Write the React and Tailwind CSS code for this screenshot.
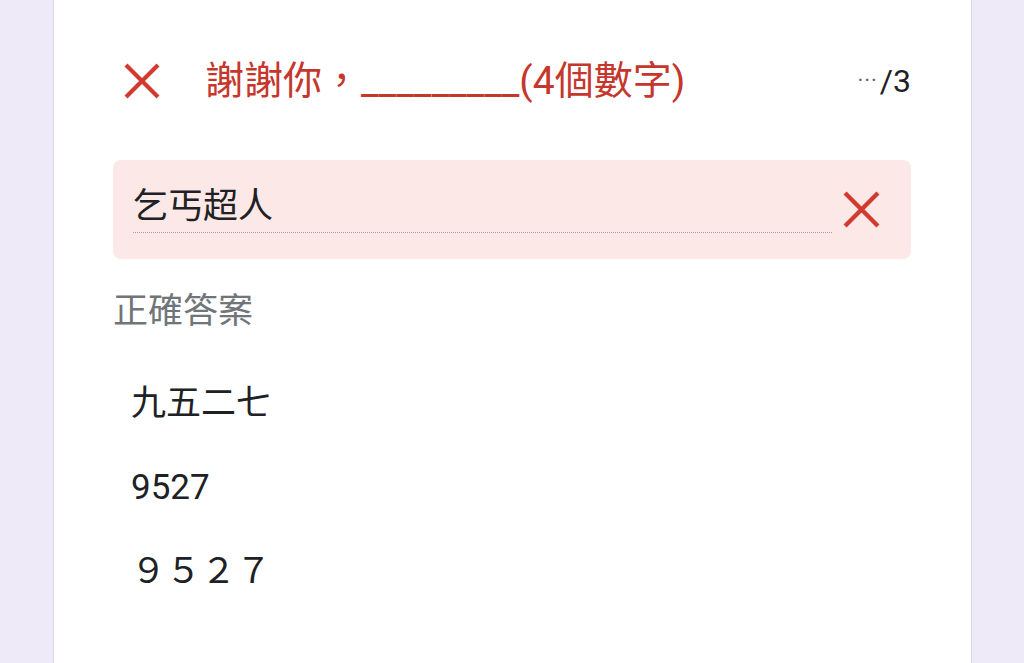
import React from "react";

const XIcon = ({ size = 36, className = "" }) => (
  <svg width={size} height={size} viewBox="0 0 36 36" className={className}>
    <path d="M2 2 L34 34 M34 2 L2 34" stroke="#d23a2f" strokeWidth="4.2" strokeLinecap="butt" fill="none" />
  </svg>
);

export default function App() {
  const font = { fontFamily: "Roboto, 'Noto Sans CJK TC', 'Noto Sans', sans-serif" };
  return (
    <div className="h-[663px] w-[1024px] overflow-hidden bg-[#eeeaf8]" style={font}>
      <div className="ml-[53px] mt-[-14px] h-[700px] w-[919px] rounded-[14px] border border-[#dad8de] bg-white pl-[59px] pr-[60px]">
        <div className="flex h-[114px] items-end">
          <div className="flex h-[40px] w-full items-center">
            <div className="w-[92px] pl-[11px]">
              <XIcon size={36} />
            </div>
            <div className="flex-1 text-[39px] leading-none text-[#c5372c]">謝謝你，_________(4個數字)</div>
            <div className="flex items-center text-[32px] leading-none text-[#202124]">
              <span className="mr-[2px] text-[22px] tracking-[1px] text-[#5f6368]">···</span>/3
            </div>
          </div>
        </div>
        <div className="mt-[59px] flex h-[99px] items-center rounded-[8px] bg-[#fce8e6] pl-[20px] pr-[30px]">
          <div className="flex h-[47px] w-[699px] items-end border-b border-dotted border-[#9aa0a6] pb-[8px]">
            <span className="text-[35px] leading-none text-[#202124]">乞丐超人</span>
          </div>
          <div className="ml-[11px] flex items-center">
            <XIcon size={37} />
          </div>
        </div>
        <div className="mt-[35px] text-[35px] leading-none text-[#70757a]">正確答案</div>
        <div className="mt-[57px] flex flex-col gap-[49px] pl-[18px] text-[35px] leading-none text-[#202124]">
          <div>九五二七</div>
          <div>9527</div>
          <div>９５２７</div>
        </div>
      </div>
    </div>
  );
}
